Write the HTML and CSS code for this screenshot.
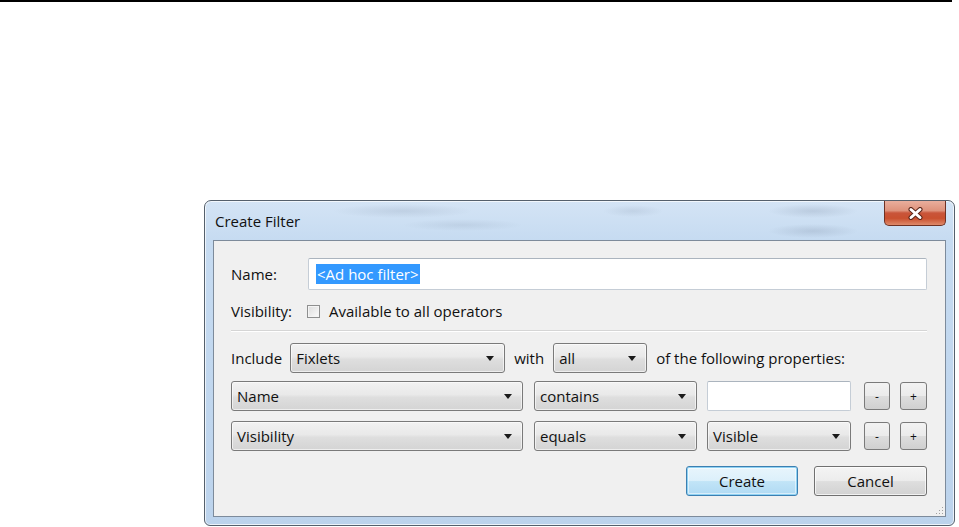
FILE: index.html
```html
<!DOCTYPE html>
<html lang="en">
<head>
    <meta charset="UTF-8">
    <title>Create Filter</title>
    <link rel="stylesheet" href="styles.css">
</head>
<body>
    <div class="linea-top"></div>

    <div class="ventana">
        <div class="titulo">
            <span class="titulo-texto">Create Filter</span>
            <div class="cerrar">
                <svg width="19" height="13" viewBox="0 0 19 13">
                    <path d="M5 2.5 L14 10.5 M14 2.5 L5 10.5" stroke="#5a2418" stroke-width="5" stroke-linecap="round"/>
                    <path d="M5 2.5 L14 10.5 M14 2.5 L5 10.5" stroke="#ffffff" stroke-width="3" stroke-linecap="round"/>
                </svg>
            </div>
        </div>

        <div class="cliente">
            <div class="fila fila-nombre">
                <span class="etiqueta">Name:</span>
                <div class="campo campo-nombre"><span class="seleccion">&lt;Ad hoc filter&gt;</span></div>
            </div>
            <div class="fila fila-visible">
                <span class="etiqueta">Visibility:</span>
                <span class="check"></span>
                <span class="check-texto">Available to all operators</span>
            </div>
            <div class="separador"></div>

            <div class="fila fila-include">
                <span class="texto-include">Include</span>
                <div class="combo ancho-fixlets">Fixlets</div>
                <span class="texto-with">with</span>
                <div class="combo ancho-all">all</div>
                <span class="texto-props">of the following properties:</span>
            </div>

            <div class="fila fila-cond">
                <div class="combo ancho-prop">Name</div>
                <div class="combo ancho-op">contains</div>
                <div class="campo ancho-valor"></div>
                <div class="mini">-</div>
                <div class="mini mas">+</div>
            </div>

            <div class="fila fila-cond fila-cond2">
                <div class="combo ancho-prop">Visibility</div>
                <div class="combo ancho-op">equals</div>
                <div class="combo ancho-valor">Visible</div>
                <div class="mini">-</div>
                <div class="mini mas">+</div>
            </div>

            <div class="fila fila-botones">
                <div class="boton boton-create">Create</div>
                <div class="boton boton-cancel">Cancel</div>
            </div>

            <svg class="grip" width="10" height="10" viewBox="0 0 10 10">
                <rect x="8" y="2" width="1" height="1" fill="#a0a0a0"/>
                <rect x="5" y="5" width="1" height="1" fill="#a0a0a0"/>
                <rect x="8" y="5" width="1" height="1" fill="#a0a0a0"/>
                <rect x="2" y="8" width="1" height="1" fill="#a0a0a0"/>
                <rect x="5" y="8" width="1" height="1" fill="#a0a0a0"/>
                <rect x="8" y="8" width="1" height="1" fill="#a0a0a0"/>
            </svg>
        </div>
    </div>
</body>
</html>
```

FILE: styles.css
```css
body {
    margin: 0;
    background-color: white;
    font-family: "Open Sans", "Noto Sans", sans-serif;
    font-size: 15px;
    color: #111;
    overflow: hidden;
}
.linea-top {
    width: 952px;
    height: 2px;
    background-color: #000;
}

.ventana {
    box-sizing: border-box;
    width: 751px;
    height: 326px;
    margin: 198px 0 0 204px;
    padding: 0 8px 8px 8px;
    border: 1px solid #55606c;
    border-radius: 7px 7px 6px 6px;
    background: linear-gradient(180deg, #d4e4f5 0%, #c6dbf1 12%, #bcd3ec 100%);
    box-shadow: inset 0 0 0 1px rgba(255, 255, 255, 0.7);
    display: flex;
    flex-direction: column;
}
.titulo {
    height: 39px;
    display: flex;
    align-items: center;
    background:
        radial-gradient(ellipse 70px 7px at 190px 10px, rgba(100, 115, 140, 0.16), transparent),
        radial-gradient(ellipse 60px 6px at 250px 24px, rgba(100, 115, 140, 0.13), transparent),
        radial-gradient(ellipse 30px 6px at 420px 10px, rgba(100, 115, 140, 0.14), transparent),
        radial-gradient(ellipse 45px 7px at 600px 10px, rgba(100, 115, 140, 0.2), transparent),
        radial-gradient(ellipse 45px 7px at 600px 30px, rgba(100, 115, 140, 0.2), transparent);
}
.titulo-texto {
    margin-left: 2px;
    color: #111;
}
.cerrar {
    align-self: flex-start;
    margin-left: auto;
    width: 62px;
    height: 25px;
    box-sizing: border-box;
    border: 1px solid #6e3123;
    border-top: none;
    border-radius: 0 0 5px 5px;
    background: linear-gradient(180deg, #e9ae9d 0%, #de927b 40%, #c9553a 50%, #c9502f 72%, #de8a6a 100%);
    display: flex;
    justify-content: center;
    align-items: center;
}

.cliente {
    position: relative;
    flex: 1;
    box-sizing: border-box;
    border: 1px solid #7d8b9b;
    background-color: #f0f0f0;
    padding: 17px 18px 0 17px;
}
.fila {
    display: flex;
    align-items: center;
}
.etiqueta {
    width: 77px;
    flex-shrink: 0;
}
.campo {
    box-sizing: border-box;
    height: 30px;
    background: white;
    border: 1px solid #c5cdd6;
    border-top-color: #abb4be;
    border-radius: 2px;
    display: flex;
    align-items: center;
}
.campo-nombre {
    width: 620px;
    height: 32px;
    padding-left: 7px;
}
.seleccion {
    background-color: #3399ff;
    color: white;
    padding: 0 1px;
    line-height: 20px;
}
.fila-visible {
    margin-top: 14px;
    height: 14px;
}
.check {
    width: 13px;
    height: 13px;
    box-sizing: border-box;
    border: 1px solid #8e8f8f;
    background: linear-gradient(135deg, #dcdcdc, #fbfbfb);
    box-shadow: inset 0 0 0 1px #f4f4f4;
    margin-left: -1px;
}
.check-texto {
    margin-left: 9px;
}
.separador {
    margin-top: 12px;
    height: 1px;
    background-color: #d5d5d5;
    border-bottom: 1px solid #ffffff;
}

.fila-include {
    margin-top: 11px;
    height: 30px;
}
.texto-include {
    margin-right: 8px;
}
.texto-with {
    margin: 0 9px 0 9px;
}
.texto-props {
    margin-left: 9px;
}
.combo {
    position: relative;
    box-sizing: border-box;
    height: 30px;
    padding-left: 5px;
    border: 1px solid #7a7a7a;
    border-radius: 3px;
    background: linear-gradient(180deg, #f2f2f2 0%, #e9e9e9 45%, #dedede 55%, #d4d4d4 100%);
    box-shadow: inset 0 0 0 1px rgba(255, 255, 255, 0.6);
    display: flex;
    align-items: center;
}
.combo::after {
    content: "";
    position: absolute;
    right: 10px;
    top: 12px;
    border-left: 4px solid transparent;
    border-right: 4px solid transparent;
    border-top: 5px solid #1a1a1a;
}
.ancho-fixlets {
    width: 215px;
}
.ancho-all {
    width: 94px;
}
.ancho-prop {
    width: 292px;
}
.ancho-op {
    width: 163px;
    margin-left: 11px;
}
.ancho-valor {
    width: 144px;
    margin-left: 10px;
}
.fila-cond {
    margin-top: 8px;
    height: 30px;
}
.fila-cond2 {
    margin-top: 10px;
}
.mini {
    box-sizing: border-box;
    width: 26px;
    height: 28px;
    margin-left: 13px;
    border: 1px solid #7a7a7a;
    border-radius: 3px;
    background: linear-gradient(180deg, #f2f2f2 0%, #ebebeb 50%, #dddddd 51%, #d0d0d0 100%);
    display: flex;
    justify-content: center;
    align-items: center;
    font-size: 12px;
}
.mini.mas {
    width: 27px;
    margin-left: 10px;
}

.fila-botones {
    margin-top: 15px;
    justify-content: flex-end;
}
.boton {
    box-sizing: border-box;
    width: 113px;
    height: 30px;
    border-radius: 3px;
    display: flex;
    justify-content: center;
    align-items: center;
}
.boton-create {
    width: 112px;
    border: 1px solid #3c7fb1;
    background: linear-gradient(180deg, #e8f5fc 0%, #dcf0fb 48%, #c1e4f7 52%, #b0daf3 100%);
    box-shadow: inset 0 0 0 1px #8fd2f3, inset 0 0 0 2px rgba(255, 255, 255, 0.5);
}
.boton-cancel {
    margin-left: 16px;
    border: 1px solid #707070;
    background: linear-gradient(180deg, #f4f4f4 0%, #ececec 48%, #dedede 52%, #d2d2d2 100%);
    box-shadow: inset 0 0 0 1px rgba(255, 255, 255, 0.7);
}
.grip {
    position: absolute;
    right: 1px;
    bottom: 1px;
}
```
